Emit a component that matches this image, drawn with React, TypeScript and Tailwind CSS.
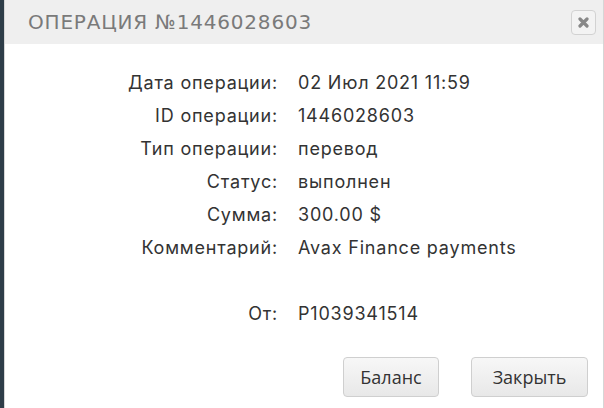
import React from 'react';

const rows: [string, string][] = [
  ['Дата операции:', '02 Июл 2021 11:59'],
  ['ID операции:', '1446028603'],
  ['Тип операции:', 'перевод'],
  ['Статус:', 'выполнен'],
  ['Сумма:', '300.00 $'],
  ['Комментарий:', 'Avax Finance payments'],
  ['', ''],
  ['От:', 'P1039341514'],
];

export default function App() {
  return (
    <div className="flex h-[408px] w-[604px] overflow-hidden bg-[#2e3d48]">
      <div className="ml-[4px] flex flex-1 flex-col border-l border-r border-[#d6d6d6] bg-white">
        {/* header */}
        <div className="flex h-[44px] items-center justify-between bg-[#efefef] pl-[23px] pr-[7px]">
          <h1
            className="text-[20px] uppercase tracking-[0.8px] text-[#7a7a7a]"
            style={{ fontFamily: '"DejaVu Sans", sans-serif' }}
          >
            Операция №1446028603
          </h1>
          <button className="flex h-[25px] w-[25px] items-center justify-center rounded-[4px] border border-[#d2d2d2] bg-[#f3f3f3]">
            <svg width="11" height="11" viewBox="0 0 11 11">
              <path d="M2 2 L9 9 M9 2 L2 9" stroke="#888" strokeWidth="3.2" strokeLinecap="round" />
            </svg>
          </button>
        </div>

        {/* body */}
        <div
          className="grid grid-cols-[273px_1fr] gap-x-[20px] pt-[22px] text-[18px] tracking-[0.8px] text-[#333]"
          style={{ fontFamily: '"Inter", sans-serif' }}
        >
          {rows.map(([label, value], i) => (
            <React.Fragment key={i}>
              <div className="flex h-[33px] items-center justify-end">{label}</div>
              <div className="flex h-[33px] items-center">{value}</div>
            </React.Fragment>
          ))}
        </div>

        {/* footer */}
        <div
          className="mt-[27px] flex justify-end gap-[32px] pr-[15px] text-[18px] text-[#333]"
          style={{ fontFamily: '"Open Sans", sans-serif' }}
        >
          <button className="h-[40px] w-[96px] rounded-[4px] border border-[#cfcfcf] bg-gradient-to-b from-[#f7f7f7] to-[#e8e8e8]">
            Баланс
          </button>
          <button className="h-[40px] w-[117px] rounded-[4px] border border-[#cfcfcf] bg-gradient-to-b from-[#f7f7f7] to-[#e8e8e8]">
            Закрыть
          </button>
        </div>
      </div>
    </div>
  );
}
